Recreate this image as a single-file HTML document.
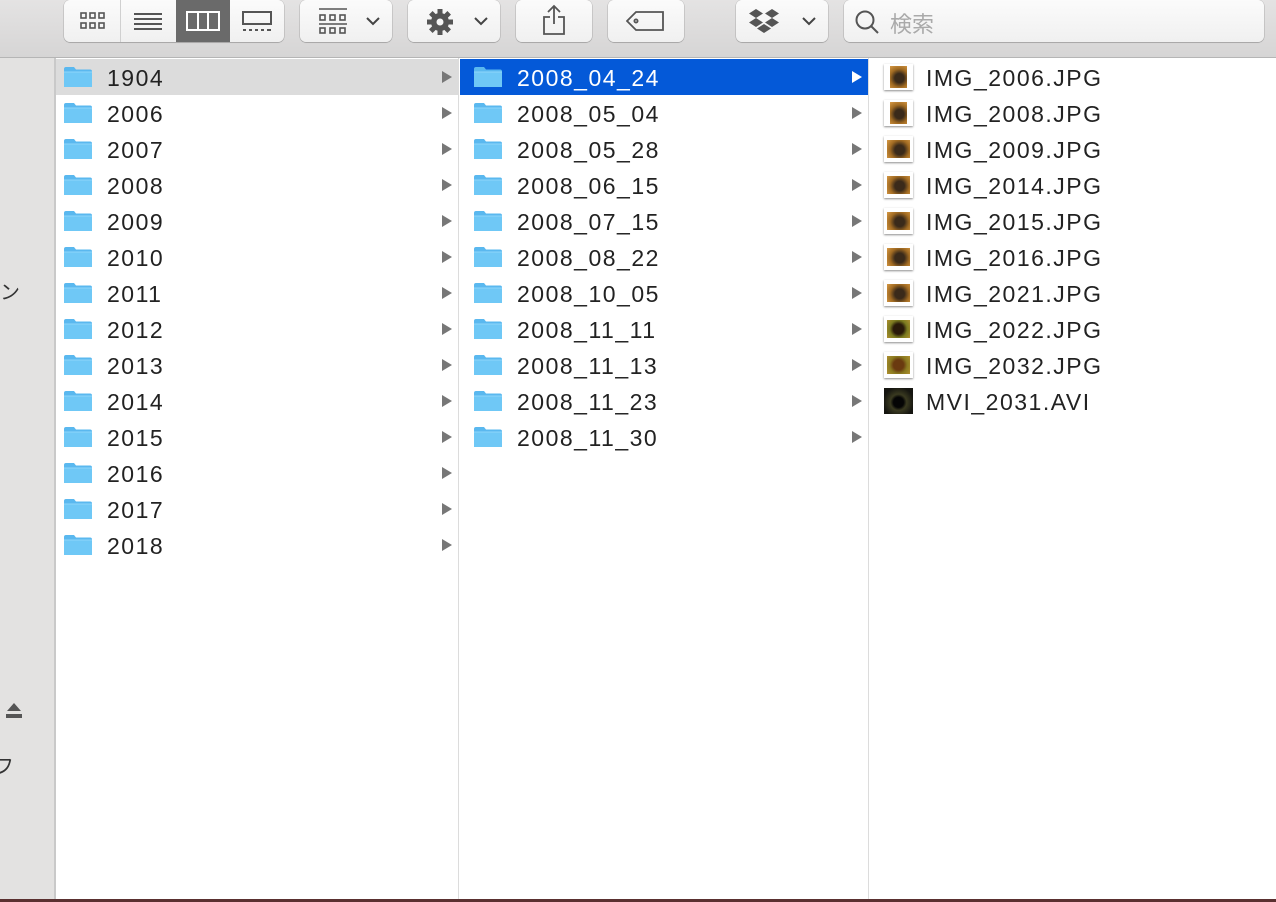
<!DOCTYPE html>
<html><head><meta charset="utf-8"><style>
*{margin:0;padding:0;box-sizing:border-box}
body{width:1276px;height:902px;overflow:hidden;background:#fff;font-family:"Liberation Sans","Noto Sans CJK JP",sans-serif;position:relative}
#tb{position:absolute;left:0;top:0;width:1276px;height:58px;background:linear-gradient(#e4e3e3,#d6d5d5);border-bottom:1px solid #b5b5b5}
.btn{position:absolute;top:0;height:42px;background:linear-gradient(#fbfbfb,#f0f0f0);border-radius:6px;box-shadow:0 0.5px 1px rgba(0,0,0,.35),0 0 0 0.5px rgba(0,0,0,.12)}
#sb{position:absolute;left:0;top:58px;width:56px;height:844px;background:#e3e2e1;border-right:2px solid #c9c9c9}
.col{position:absolute;top:58px;height:842px}
.row{position:absolute;left:0;right:0;height:36px;font-size:23px;letter-spacing:1.5px;line-height:36px;color:#222}
.row svg.f{position:absolute;left:7px;top:7px}
.row span{position:absolute;left:51px;top:1px}
.row i{position:absolute;right:6px;top:12px;width:0;height:0;border-left:10px solid #777;border-top:6px solid transparent;border-bottom:6px solid transparent}
.th{position:absolute;left:14px;top:5px;width:29px;height:26px;background:#fff;box-shadow:0 1px 2px rgba(0,0,0,.45)}
.th b{position:absolute;left:3px;top:4px;right:3px;bottom:4px;background:radial-gradient(circle at 55% 55%,#3a2a1a 0 30%,#a06a22 60%,#d89a45)}
.th.p b{left:6px;right:6px;top:2px;bottom:2px}
</style></head><body>
<div id="tb">
 <div class="btn" style="left:64px;width:220px">
  <div style="position:absolute;left:112px;top:0;width:54px;height:42px;background:#6a6a6a"></div>
  <div style="position:absolute;left:56px;top:0;width:1px;height:42px;background:#d0d0d0"></div>
  <svg style="position:absolute;left:16px;top:12px" width="26" height="18" fill="none" stroke="#555" stroke-width="1.6"><rect x="1" y="1" width="5" height="5"/><rect x="10" y="1" width="5" height="5"/><rect x="19" y="1" width="5" height="5"/><rect x="1" y="11" width="5" height="5"/><rect x="10" y="11" width="5" height="5"/><rect x="19" y="11" width="5" height="5"/></svg>
  <svg style="position:absolute;left:70px;top:12px" width="28" height="18" stroke="#555" stroke-width="2"><path d="M0 2H28M0 7H28M0 12H28M0 17H28"/></svg>
  <svg style="position:absolute;left:122px;top:11px" width="34" height="20" fill="none" stroke="#fff" stroke-width="2"><rect x="1" y="1" width="32" height="18"/><path d="M12 1V19M22 1V19"/></svg>
  <svg style="position:absolute;left:178px;top:11px" width="30" height="22" fill="none" stroke="#555" stroke-width="2"><rect x="1" y="1" width="28" height="12"/><path d="M1 19H4M7 19H10M13 19H16M19 19H22M25 19H29"/></svg>
 </div>
 <div class="btn" style="left:300px;width:92px">
  <svg style="position:absolute;left:18px;top:8px" width="30" height="28" fill="none" stroke="#555" stroke-width="1.6"><path d="M1 1H29"/><rect x="2" y="7" width="5" height="5"/><rect x="12" y="7" width="5" height="5"/><rect x="22" y="7" width="5" height="5"/><rect x="2" y="20" width="5" height="5"/><rect x="12" y="20" width="5" height="5"/><rect x="22" y="20" width="5" height="5"/><path d="M1 16H29"/></svg>
  <svg style="position:absolute;left:66px;top:16px" width="14" height="10" fill="none" stroke="#444" stroke-width="2"><path d="M1 2L7 8L13 2"/></svg>
 </div>
 <div class="btn" style="left:408px;width:92px">
  <svg style="position:absolute;left:18px;top:8px" width="28" height="28" viewBox="0 0 28 28"><g fill="#555"><circle cx="14" cy="14" r="9"/><g stroke="#555" stroke-width="5"><path d="M14 1V27M1 14H27M4.8 4.8L23.2 23.2M23.2 4.8L4.8 23.2"/></g></g><circle cx="14" cy="14" r="3.5" fill="#f5f5f5"/></svg>
  <svg style="position:absolute;left:66px;top:16px" width="14" height="10" fill="none" stroke="#444" stroke-width="2"><path d="M1 2L7 8L13 2"/></svg>
 </div>
 <div class="btn" style="left:516px;width:76px">
  <svg style="position:absolute;left:26px;top:4px" width="24" height="32" fill="none" stroke="#555" stroke-width="1.8"><path d="M12 2V20M6 8L12 2L18 8M8 13H2V30H22V13H16"/></svg>
 </div>
 <div class="btn" style="left:608px;width:76px">
  <svg style="position:absolute;left:18px;top:11px" width="40" height="20" fill="none" stroke="#555" stroke-width="1.8"><path d="M10 1H37V19H10L1 10Z"/><circle cx="10" cy="10" r="1.6"/></svg>
 </div>
 <div class="btn" style="left:736px;width:92px">
  <svg style="position:absolute;left:12px;top:9px" width="32" height="26" viewBox="0 0 32 26" fill="#555"><path d="M8 0L15 4.5L8 9L1 4.5ZM24 0L31 4.5L24 9L17 4.5ZM8 9L15 13.5L8 18L1 13.5ZM24 9L31 13.5L24 18L17 13.5ZM16 15L23 19.5L16 24L9 19.5Z"/></svg>
  <svg style="position:absolute;left:66px;top:16px" width="14" height="10" fill="none" stroke="#444" stroke-width="2"><path d="M1 2L7 8L13 2"/></svg>
 </div>
 <div class="btn" style="left:844px;width:420px">
  <svg style="position:absolute;left:10px;top:9px" width="26" height="26" fill="none" stroke="#555" stroke-width="2"><circle cx="11" cy="11" r="8.5"/><path d="M17 17L24 24"/></svg>
  <div style="position:absolute;left:46px;top:7px;font-size:22px;color:#aaa">検索</div>
 </div>
</div>
<div id="sb">
 <div style="position:absolute;left:0;top:218px;font-size:20px;color:#333">ン</div>
 <svg style="position:absolute;left:6px;top:644px" width="16" height="18"><path d="M8 1L15 9H1Z" fill="#555"/><rect x="0" y="12" width="16" height="4" fill="#555"/></svg>
 <div style="position:absolute;left:-6px;top:692px;font-size:20px;color:#333">フ</div>
</div>
<svg width="0" height="0" style="position:absolute"><defs><g id="fd"><path d="M1 3Q1 1 3 1H11L13 3.5H27Q29 3.5 29 5.5V21H1Z" fill="#5ab8ef"/><path d="M1 6H29V21H1Z" fill="#6fc8f6"/><path d="M1 6H29" stroke="#8fd6fb" stroke-width="1"/></g></defs></svg>

<div class="col" style="left:56px;width:403px;border-right:1px solid #dcdcdc">
 <div class="row" style="top:1px;background:#dcdcdc"><svg class="f" width="30" height="22"><use href="#fd"/></svg><span>1904</span><i></i></div>
 <div class="row" style="top:37px"><svg class="f" width="30" height="22"><use href="#fd"/></svg><span>2006</span><i></i></div>
 <div class="row" style="top:73px"><svg class="f" width="30" height="22"><use href="#fd"/></svg><span>2007</span><i></i></div>
 <div class="row" style="top:109px"><svg class="f" width="30" height="22"><use href="#fd"/></svg><span>2008</span><i></i></div>
 <div class="row" style="top:145px"><svg class="f" width="30" height="22"><use href="#fd"/></svg><span>2009</span><i></i></div>
 <div class="row" style="top:181px"><svg class="f" width="30" height="22"><use href="#fd"/></svg><span>2010</span><i></i></div>
 <div class="row" style="top:217px"><svg class="f" width="30" height="22"><use href="#fd"/></svg><span>2011</span><i></i></div>
 <div class="row" style="top:253px"><svg class="f" width="30" height="22"><use href="#fd"/></svg><span>2012</span><i></i></div>
 <div class="row" style="top:289px"><svg class="f" width="30" height="22"><use href="#fd"/></svg><span>2013</span><i></i></div>
 <div class="row" style="top:325px"><svg class="f" width="30" height="22"><use href="#fd"/></svg><span>2014</span><i></i></div>
 <div class="row" style="top:361px"><svg class="f" width="30" height="22"><use href="#fd"/></svg><span>2015</span><i></i></div>
 <div class="row" style="top:397px"><svg class="f" width="30" height="22"><use href="#fd"/></svg><span>2016</span><i></i></div>
 <div class="row" style="top:433px"><svg class="f" width="30" height="22"><use href="#fd"/></svg><span>2017</span><i></i></div>
 <div class="row" style="top:469px"><svg class="f" width="30" height="22"><use href="#fd"/></svg><span>2018</span><i></i></div>
</div>
<div class="col" style="left:460px;width:409px;border-right:1px solid #dcdcdc">
 <div class="row" style="top:1px;background:#0459d8;color:#fff"><svg class="f" style="left:13px" width="30" height="22"><use href="#fd"/></svg><span style="left:57px">2008_04_24</span><i style="border-left-color:#fff"></i></div>
 <div class="row" style="top:37px"><svg class="f" style="left:13px" width="30" height="22"><use href="#fd"/></svg><span style="left:57px">2008_05_04</span><i></i></div>
 <div class="row" style="top:73px"><svg class="f" style="left:13px" width="30" height="22"><use href="#fd"/></svg><span style="left:57px">2008_05_28</span><i></i></div>
 <div class="row" style="top:109px"><svg class="f" style="left:13px" width="30" height="22"><use href="#fd"/></svg><span style="left:57px">2008_06_15</span><i></i></div>
 <div class="row" style="top:145px"><svg class="f" style="left:13px" width="30" height="22"><use href="#fd"/></svg><span style="left:57px">2008_07_15</span><i></i></div>
 <div class="row" style="top:181px"><svg class="f" style="left:13px" width="30" height="22"><use href="#fd"/></svg><span style="left:57px">2008_08_22</span><i></i></div>
 <div class="row" style="top:217px"><svg class="f" style="left:13px" width="30" height="22"><use href="#fd"/></svg><span style="left:57px">2008_10_05</span><i></i></div>
 <div class="row" style="top:253px"><svg class="f" style="left:13px" width="30" height="22"><use href="#fd"/></svg><span style="left:57px">2008_11_11</span><i></i></div>
 <div class="row" style="top:289px"><svg class="f" style="left:13px" width="30" height="22"><use href="#fd"/></svg><span style="left:57px">2008_11_13</span><i></i></div>
 <div class="row" style="top:325px"><svg class="f" style="left:13px" width="30" height="22"><use href="#fd"/></svg><span style="left:57px">2008_11_23</span><i></i></div>
 <div class="row" style="top:361px"><svg class="f" style="left:13px" width="30" height="22"><use href="#fd"/></svg><span style="left:57px">2008_11_30</span><i></i></div>
</div>
<div class="col" style="left:870px;width:406px">
 <div class="row" style="top:1px"><div class="th p"><b></b></div><span style="left:56px">IMG_2006.JPG</span></div>
 <div class="row" style="top:37px"><div class="th p"><b></b></div><span style="left:56px">IMG_2008.JPG</span></div>
 <div class="row" style="top:73px"><div class="th"><b></b></div><span style="left:56px">IMG_2009.JPG</span></div>
 <div class="row" style="top:109px"><div class="th"><b></b></div><span style="left:56px">IMG_2014.JPG</span></div>
 <div class="row" style="top:145px"><div class="th"><b></b></div><span style="left:56px">IMG_2015.JPG</span></div>
 <div class="row" style="top:181px"><div class="th"><b></b></div><span style="left:56px">IMG_2016.JPG</span></div>
 <div class="row" style="top:217px"><div class="th"><b></b></div><span style="left:56px">IMG_2021.JPG</span></div>
 <div class="row" style="top:253px"><div class="th"><b style="background:radial-gradient(circle,#2a1a0a 0 35%,#7a7a20 60%,#b09030)"></b></div><span style="left:56px">IMG_2022.JPG</span></div>
 <div class="row" style="top:289px"><div class="th"><b style="background:radial-gradient(circle,#6a3a10 0 35%,#8a7a20 60%,#b09030)"></b></div><span style="left:56px">IMG_2032.JPG</span></div>
 <div class="row" style="top:325px"><div class="th" style="box-shadow:none;background:#111"><b style="left:0;right:0;top:0;bottom:0;background:radial-gradient(circle at 50% 55%,#050505 0 25%,#3a3a20 40%,#151510 75%)"></b></div><span style="left:56px">MVI_2031.AVI</span></div>
</div>
<div style="position:absolute;left:0;top:899px;width:1276px;height:3px;background:#5a3030"></div>
</body></html>
